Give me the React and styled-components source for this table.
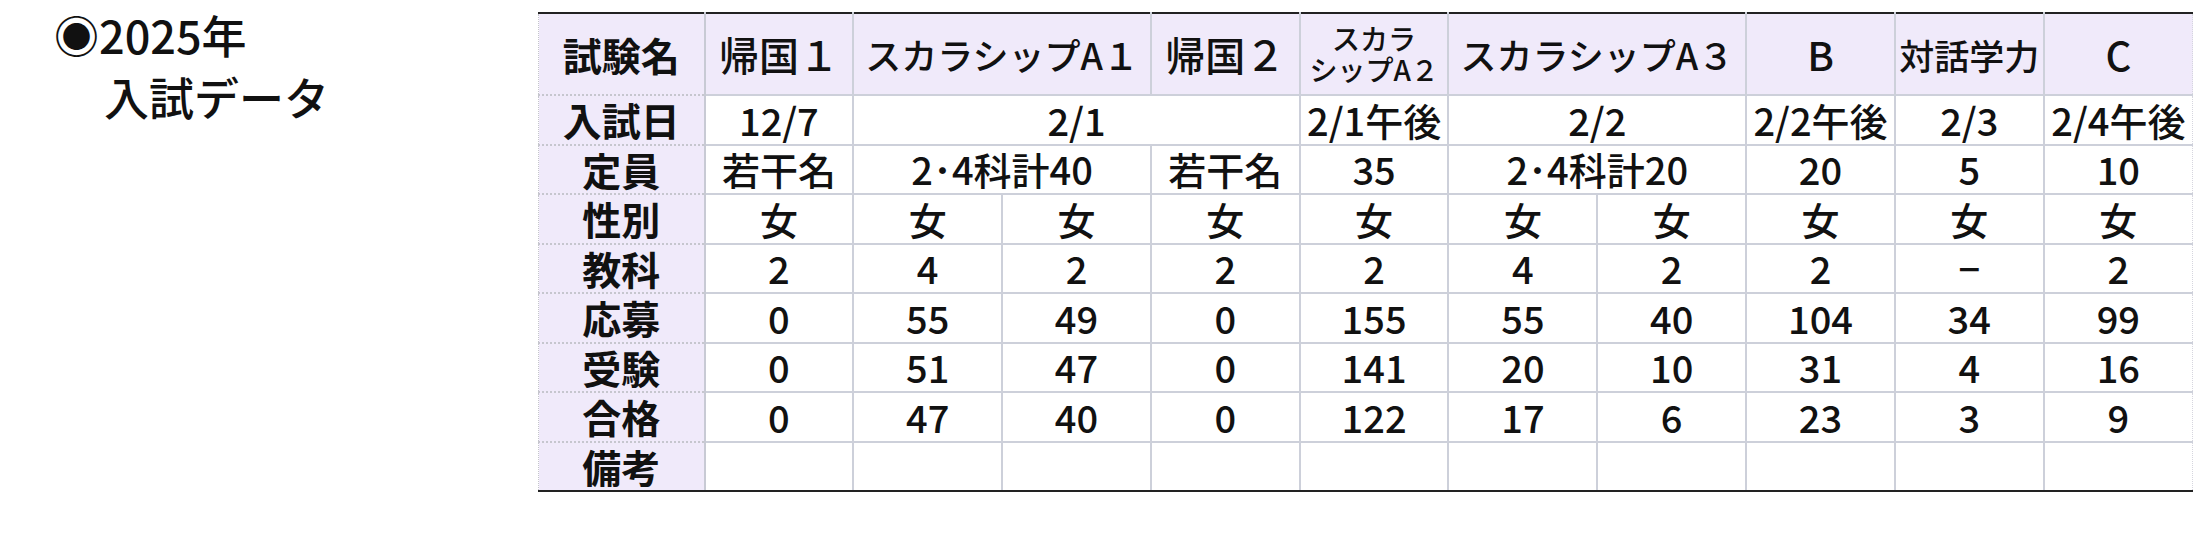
import React from 'react'
import styled, { createGlobalStyle } from 'styled-components'

const GlobalStyle = createGlobalStyle`
  body {
    margin: 0;
    background: #fff;
  }
  * {
    box-sizing: border-box;
  }
`

const Page = styled.div`
  display: flex;
  align-items: flex-start;
  width: 2210px;
  height: 560px;
  font-family: "Noto Sans CJK JP", sans-serif;
  color: #111;
`

const Heading = styled.div`
  flex: 0 0 538px;
  padding: 4px 0 0 54px;
  font-size: 45px;
  font-weight: 500;
  line-height: 62px;
`

const HeadingLine = styled.div`
  padding-left: ${p => (p.$indent ? '50px' : '0')};
  white-space: nowrap;
`

const Grid = styled.table`
  margin-top: 12px;
  width: 1655px;
  border-collapse: collapse;
  table-layout: fixed;
  border-top: 2px solid #222;
  border-bottom: 2px solid #222;
  border-left: 1px dotted #c4c4cc;

  tr:last-child > td,
  tr:last-child > th {
    border-bottom: 2px solid #222;
  }
  td:last-child,
  th:last-child {
    border-right: 1px dotted #d6d6de;
  }
`

const Row = styled.tr`
  height: ${p => (p.$tall ? '82px' : '49.5px')};
`

const Label = styled.th`
  padding: 0;
  background: #f0eafa;
  font-size: 39px;
  font-weight: 700;
  line-height: 1;
  text-align: center;
  white-space: nowrap;
  border-bottom: 2px dotted #c6c6ce;
  border-right: 2px solid #c8cad4;
`

const HeadCell = styled.th`
  padding: 0;
  background: #f0eafa;
  font-size: ${p => p.$size}px;
  font-weight: 500;
  line-height: ${p => (p.$stack ? '31px' : '1')};
  text-align: center;
  white-space: nowrap;
  border-bottom: 2px solid #cdd0da;
  border-right: 2px solid #cdd0da;
`

const Cell = styled.td`
  padding: 0;
  font-size: 38px;
  font-weight: 500;
  line-height: 1;
  text-align: center;
  white-space: nowrap;
  border-bottom: 2px solid #cdd0da;
  border-right: 2px solid #cdd0da;
`

const heads = [
  { text: '帰国１', size: 40 },
  { text: 'スカラシップA１', size: 36, span: 2 },
  { text: '帰国２', size: 40 },
  { text: ['スカラ', 'シップA２'], size: 28 },
  { text: 'スカラシップA３', size: 36, span: 2 },
  { text: 'B', size: 40 },
  { text: '対話学力', size: 35 },
  { text: 'C', size: 40 },
]

const fill = (v) => Array.from({ length: 10 }, () => [v, 1])
const list = (arr) => arr.map(v => [v, 1])

const rows = [
  { label: '入試日', cells: [['12/7', 1], ['2/1', 3], ['2/1午後', 1], ['2/2', 2], ['2/2午後', 1], ['2/3', 1], ['2/4午後', 1]] },
  { label: '定員', cells: [['若干名', 1], ['2･4科計40', 2], ['若干名', 1], ['35', 1], ['2･4科計20', 2], ['20', 1], ['5', 1], ['10', 1]] },
  { label: '性別', cells: fill('女') },
  { label: '教科', cells: list(['2', '4', '2', '2', '2', '4', '2', '2', '−', '2']) },
  { label: '応募', cells: list(['0', '55', '49', '0', '155', '55', '40', '104', '34', '99']) },
  { label: '受験', cells: list(['0', '51', '47', '0', '141', '20', '10', '31', '4', '16']) },
  { label: '合格', cells: list(['0', '47', '40', '0', '122', '17', '6', '23', '3', '9']) },
  { label: '備考', cells: fill('') },
]

function App() {
  return (
    <Page>
      <GlobalStyle />
      <Heading>
        <HeadingLine>◉2025年</HeadingLine>
        <HeadingLine $indent>入試データ</HeadingLine>
      </Heading>
      <Grid>
        <colgroup>
          <col style={{ width: 166 }} />
          {Array.from({ length: 10 }, (_, i) => <col key={i} />)}
        </colgroup>
        <tbody>
          <Row $tall>
            <Label>試験名</Label>
            {heads.map((h, i) => (
              <HeadCell key={i} colSpan={h.span || 1} $size={h.size} $stack={Array.isArray(h.text)}>
                {Array.isArray(h.text)
                  ? h.text.map((t, j) => <div key={j}>{t}</div>)
                  : h.text}
              </HeadCell>
            ))}
          </Row>
          {rows.map(r => (
            <Row key={r.label}>
              <Label>{r.label}</Label>
              {r.cells.map(([v, span], i) => (
                <Cell key={i} colSpan={span}>{v}</Cell>
              ))}
            </Row>
          ))}
        </tbody>
      </Grid>
    </Page>
  )
}

export default App
